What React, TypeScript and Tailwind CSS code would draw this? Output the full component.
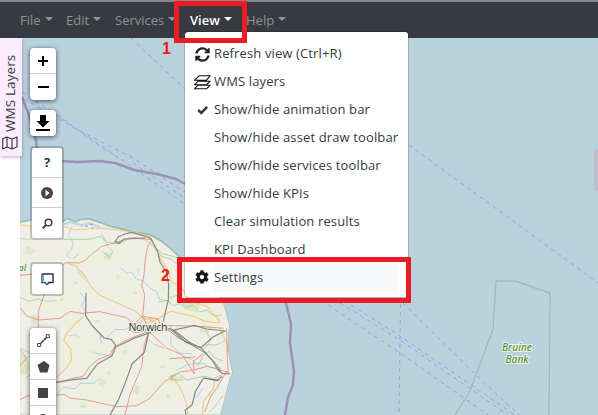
import React from "react";

const menuItems = [
  { label: "Refresh view (Ctrl+R)", icon: "refresh" },
  { label: "WMS layers", icon: "layers" },
  { label: "Show/hide animation bar", icon: "check" },
  { label: "Show/hide asset draw toolbar" },
  { label: "Show/hide services toolbar" },
  { label: "Show/hide KPIs" },
  { label: "Clear simulation results" },
  { label: "KPI Dashboard" },
  { label: "Settings", icon: "gear", active: true },
];

function MenuIcon({ name }: { name?: string }) {
  if (name === "refresh")
    return (
      <svg width="15" height="15" viewBox="0 0 512 512" className="ml-px" fill="#212529">
        <path d="M370.72 133.28C339.458 104.008 298.888 87.962 255.848 88c-77.458.068-144.328 53.178-162.791 126.85-1.344 5.363-6.122 9.15-11.651 9.15H24.103c-7.498 0-13.194-6.807-11.807-14.176C33.933 94.924 134.813 8 256 8c66.448 0 126.791 26.136 171.315 68.685L463.03 40.97C478.149 25.851 504 36.559 504 57.941V192c0 13.255-10.745 24-24 24H345.941c-21.382 0-32.09-25.851-16.971-40.971l41.75-41.749zM32 296h134.059c21.382 0 32.09 25.851 16.971 40.971l-41.75 41.75c31.262 29.273 71.835 45.319 114.876 45.28 77.418-.07 144.315-53.144 162.787-126.849 1.344-5.363 6.122-9.15 11.651-9.15h57.304c7.498 0 13.194 6.807 11.807 14.176C478.067 417.076 377.187 504 256 504c-66.448 0-126.791-26.136-171.315-68.685L48.97 471.03C33.851 486.149 8 475.441 8 454.059V320c0-13.255 10.745-24 24-24z" />
      </svg>
    );
  if (name === "layers")
    return (
      <svg width="17" height="15" viewBox="0 0 17 15" fill="white" stroke="#111" strokeWidth="1.1">
        <path d="M.7 13.7 4 10.2h12l-3.3 3.5zM.7 9.7 4 6.2h12l-3.3 3.5zM.7 5.2 5 .8h11l-3.5 4.4z" />
      </svg>
    );
  if (name === "check")
    return (
      <svg width="12" height="10" viewBox="0 0 12 10" className="ml-[3px]">
        <path d="m1.2 5 3.1 3L10.2 1.9" fill="none" stroke="#343a40" strokeWidth="2.6" />
      </svg>
    );
  if (name === "gear")
    return (
      <svg width="14" height="14" viewBox="0 0 512 512" className="mt-[-2px] ml-px" fill="#16191c">
        <path d="M487.4 315.7l-42.6-24.6c4.3-23.2 4.3-47 0-70.2l42.6-24.6c4.9-2.8 7.1-8.6 5.5-14-11.1-35.6-30-67.8-54.7-94.6-3.8-4.1-10-5.1-14.8-2.3L380.8 110c-17.9-15.4-38.5-27.3-60.8-35.1V25.8c0-5.6-3.9-10.5-9.4-11.7-36.7-8.2-74.3-7.8-109.2 0-5.5 1.2-9.4 6.1-9.4 11.7V75c-22.2 7.9-42.8 19.8-60.8 35.1L88.7 85.5c-4.9-2.8-11-1.9-14.8 2.3-24.7 26.7-43.6 58.9-54.7 94.6-1.7 5.4.6 11.2 5.5 14L67.3 221c-4.3 23.2-4.3 47 0 70.2l-42.6 24.6c-4.9 2.8-7.1 8.6-5.5 14 11.1 35.6 30 67.8 54.7 94.6 3.8 4.1 10 5.1 14.8 2.3l42.6-24.6c17.9 15.4 38.5 27.3 60.8 35.1v49.2c0 5.6 3.9 10.5 9.4 11.7 36.7 8.2 74.3 7.8 109.2 0 5.5-1.2 9.4-6.1 9.4-11.7v-49.2c22.2-7.9 42.8-19.8 60.8-35.1l42.6 24.6c4.9 2.8 11 1.9 14.8-2.3 24.7-26.7 43.6-58.9 54.7-94.6 1.5-5.5-.7-11.3-5.6-14.1zM256 336c-44.1 0-80-35.9-80-80s35.9-80 80-80 80 35.9 80 80-35.9 80-80 80z" />
      </svg>
    );
  return null;
}

function NavItem({ label, width, active = false }: { label: string; width: string; active?: boolean }) {
  return (
    <div className={`flex shrink-0 items-center whitespace-nowrap ${width} ${active ? "font-semibold text-white" : "text-[#919397]"}`}>
      <span className="mt-px">{label}</span>
      <span className="mt-[-2px] ml-[4px] border-x-[4px] border-t-[4px] border-x-transparent border-t-current" />
    </div>
  );
}

// The Norfolk coast, drawn on a grid three times finer than the page.
function Land() {
  return (
    <g transform="translate(20 38) scale(.33333)" strokeLinecap="round">
      <path
        d="M0 552 30 547 130 551 140 541 160 550 175 545 205 542 250 556 290 570 340 584 390 590 420 606 450 629 475 653 530 700 590 765 612 800 622 836 629 861 625 912 626 940 630 970 638 1005 630 1022 620 1060 602 1131H0Z"
        fill="#efefe8" stroke="#a9c9b4" strokeWidth="3"
      />
      <g fill="#edf1dc" opacity=".8">
        <path d="M130 600 250 602 330 616 395 630 372 680 290 665 220 690 150 650ZM0 740 60 700 130 715 190 800 170 830 70 820 0 780ZM240 700 350 720 345 790 300 800 240 760ZM395 640 450 690 478 780 435 800 400 730Z" />
        <path d="M130 840 195 850 270 930 210 1000 130 980 145 900ZM290 910 350 910 320 1000 290 1090 110 1120 210 1020ZM390 910 450 930 500 1020 470 1090 350 1110ZM530 780 590 800 600 850 540 860 460 830Z" />
      </g>
      <g fill="#d3e3ba" opacity=".65">
        <path d="M0 945 20 957 32 985 20 1012 0 1010ZM35 830l25 8-8 20-22-4ZM170 688l18 12 10 30-26-24ZM255 640l22 8-6 20-22-6ZM480 778l60 15-8 30-38-8ZM550 862l30 8-18 16-26-5ZM450 1010l42 6-20 18-20-5ZM20 625l30 14-12 10-30-2ZM345 1040l15 5-6 24-14-4ZM240 1020l20 10-10 20-15-8Z" />
        <path d="M160 730h12v9h-12zM225 845h14v8h-14zM290 710h9v12h-9zM340 760h12v8h-12zM260 1000h12v12h-12zM310 935h10v12h-10zM420 980h14v10h-14zM180 1100h16v10h-16zM215 940h12v8h-12zM350 690h9v16h-9zM120 780h11v9h-11zM440 1070h10v12h-10zM565 1060h12v16h-12z" />
      </g>
      <g stroke="#88b899" strokeWidth="5" opacity=".75">
        <path d="M0 552 25 547M130 551 142 541 165 552 180 545 208 543 235 552 270 565 295 570 345 583 390 590 425 610 452 632 482 660" />
      </g>
      <g stroke="#a6c99c" strokeWidth="3" opacity=".8">
        <path d="M130 604 210 604 240 595 262 613 300 618 330 599 372 604 405 628 428 648 452 653 480 662M400 625 424 655 455 664 485 690M0 602 30 604" />
        <path d="M415 792 440 787 460 803 480 797 500 808 518 802 540 822 560 816 584 835 605 830M450 780 475 770 490 790M450 865 475 898 506 916 530 930 560 920 588 921 620 906M490 955 515 964 535 982 550 952 568 940 583 959 606 968M450 1015 474 1006 500 1026 552 1015 580 1022 606 1010M559 880 573 906 553 932M465 1010 452 1025 490 1026M606 1075 585 1106 570 1120" />
      </g>
      <g stroke="#a2cce0" strokeWidth="2.5">
        <path d="M155 568 145 590 160 614 154 636 140 650 148 660M246 588 262 625 280 640 268 656 246 640M160 661 175 649M0 778 25 790 55 783 80 790 110 788M180 765 195 780 186 805 196 820M150 894 166 889 178 900M240 894 260 900 286 874 317 875 335 860 360 852M240 895 244 915M30 945 0 930M110 1072 128 1048 166 1052 180 1036 220 1036 240 1022M225 945 278 955M302 690 322 706 335 702 348 722 372 730 390 750 410 761 418 784 450 790M453 895 452 920 480 946 515 947M470 998 502 980 545 975 570 989 602 990M550 1050 530 1078M380 900 400 918 432 930" />
      </g>
      <g stroke="#efc97f" strokeWidth="3.2">
        <path d="M0 561 35 565M130 565 165 575 240 570 300 577 346 583 391 596 400 622 422 663 447 702 452 730 487 752 510 790 560 804 600 850M140 674 168 684 195 713 212 745 240 772 290 794 345 819 370 840 400 850M187 838 169 855 139 887 131 909 152 932 155 965 140 990 110 1017M370 840 380 855 400 850 452 820 520 835 554 850 600 855M356 870 368 843 395 842 412 872M452 1015 475 1040 490 1070 500 1100 505 1130M585 1020 580 1052 550 1090 548 1130M600 872 622 920 622 940" />
      </g>
      <g stroke="#e28f76" strokeWidth="3" opacity=".85">
        <path d="M0 712 40 708M125 683 138 674 178 675 195 667 215 649 245 625 285 615 315 605 345 599 395 605 382 628 375 672 372 711 365 742 374 770 368 835 386 872" />
        <path d="M0 808 20 834 55 846 120 841 150 820 185 826 240 821 320 839 346 867 380 876M55 868 55 820 75 765M0 983 20 960 0 936M20 1020 30 1010M0 1085 30 1070" />
        <path d="M110 1033 190 1014 210 984 235 964 270 950 282 929 315 908 356 891 388 880M110 1071 135 1070 150 1080 200 1086 290 1106 350 1103 387 1083 435 1030 480 1002 512 998 562 985 595 994 628 1005M315 1131 330 1070 365 985 373 920 386 880" />
        <path d="M386 878 343 884 325 873 350 850 368 835 415 843 422 864 390 884 440 930 488 952 523 1008 520 970 548 948M390 883 430 862 540 865 610 871M620 872 622 965 625 1008M620 1000 590 1050 570 1080 555 1120M450 962 525 957" />
      </g>
      <g stroke="#898b85" strokeWidth="3.7">
        <path d="M198 765 197 833 215 861 252 900 274 904 287 922 285 930M287 610 294 597 315 588 334 583 370 593 393 602 413 640 420 672 439 702 446 741 445 785 430 850" />
        <path d="m110 1033 50-8 40-4 32-43 43-24 12-27 60-28 45-16M270 1131l25-45 21-52 20-56 37-35 12-55M285 610 297 616 312 603 374 600" />
        <path d="m440 870 25 9 45 35 33 16 35 38 16 28 13 10 22 2M458 877l65-15 37 11 56 6-37 18-36 32-43-15-50-42M548 1024l-21 35-11 42-20 15 2 15M550 1020l40 8 15-12" />
      </g>
      <path d="m440 872 35 28 32 15 46 29 36 34 12 20M552 1020l46 7" stroke="#5d745e" strokeWidth="2" />
      <path d="m135 558 18-7 30 11 25-6 28 10" stroke="#b4d3dc" strokeWidth="8" opacity=".8" />
      <path d="M196 562h7v5h-7zM210 557h8v4h-8zM215 567h5v4h-5z" fill="#7278d9" opacity=".6" />
    </g>
  );
}

function MapCanvas() {
  return (
    <svg width="578" height="377" viewBox="20 38 578 377" className="block" fill="none" strokeLinejoin="round">
      <path fill="#bad2de" d="M20 38h578v377H20z" />
      <Land />
      <g stroke="#8b87ed" opacity=".7" strokeDasharray="4 4">
        <path d="M131 38 186 90M22 92 80 131 135 169 186 205M24 99 78 130 133 158 186 193M58 115 91 140 118 158M133 163 186 199M409 145 598 283M400.5 304 399 415M403 303 475 374 519 415M351 305 400 336 465 381 515 415M340 303 400 340 508 415M328 305 400 353 488 415" />
      </g>
      <path d="m22 97 7 18 7 25 2 20 24 1 15 1 23-1 15 2 19 7 23 4 19 5 13 7M286 303l5 21-1 19 4 28-1 14-5 12-3 18" stroke="#998cae" strokeWidth="2.5" opacity=".9" />
      <path d="m455 415 15-24 23-62 3-48h19l35 12-1 122" stroke="#95c2ae" strokeWidth="1.4" />
      <path d="M595 150h8v40h-8z" fill="#c4b8c5" stroke="#bfaebd" opacity=".75" />
      <g fontFamily='"Noto Sans", sans-serif' paintOrder="stroke" stroke="#f1f4ed" strokeWidth="1.8">
        <text x="128.5" y="331" fontSize="10.5" fill="#343434" textLength="39">Norwich</text>
        <g fill="#4f9134" fontSize="10" fontStyle="italic" fontWeight="500">
          <text x="502" y="351" textLength="30">Bruine</text>
          <text x="505.5" y="363" textLength="23">Bank</text>
          <text x="18.500" y="271" fontSize="9">al</text>
        </g>
      </g>
    </svg>
  );
}

const cell = "flex items-center justify-center border-b border-[#ccc] last:border-b-0";

function MapControls() {
  return (
    <div className="absolute top-[10px] left-[10px] flex w-[34px] flex-col items-start">
      <div className="w-[26px] overflow-hidden rounded bg-white shadow-[0_1px_5px_rgba(0,0,0,0.65)]">
        <div className={`h-[26px] ${cell}`}><svg width="10" height="10"><path d="M5 0v10M0 5h10" stroke="#000" strokeWidth="2" /></svg></div>
        <div className={`h-[26px] ${cell}`}><svg width="11" height="10"><path d="M0 5h11" stroke="#000" strokeWidth="2" /></svg></div>
      </div>
      <div className="mt-[10px] flex h-[26px] w-[26px] items-center justify-center rounded bg-white shadow-[0_1px_5px_rgba(0,0,0,0.65)]">
        <svg width="14" height="16"><path d="M4 0h6v6h3.500L7 12.500.5 6H4zM0 14h14v2H0z" fill="#000" /></svg>
      </div>
      <div className="mt-[10px] w-[34px] overflow-hidden rounded border-2 border-black/20 bg-white bg-clip-padding">
        <div className={`h-[30px] ${cell} font-['Noto_Sans',sans-serif] text-[13px] font-bold text-[#333]`}>?</div>
        <div className={`h-[30px] ${cell}`}><svg width="12" height="12"><circle cx="6" cy="6" r="6" fill="#444" /><path d="M4.5 2.500 8.500 6l-4 3.500z" fill="#fff" /></svg></div>
        <div className={`h-[30px] ${cell}`}><svg width="11" height="11" fill="none" stroke="#444" strokeWidth="1.5"><circle cx="6.5" cy="4.5" r="3.3" /><path d="M4 7 .8 10.2" strokeWidth="2" /></svg></div>
      </div>
      <div className="mt-[22px] flex h-[34px] w-[34px] items-center justify-center rounded border-2 border-black/20 bg-white bg-clip-padding">
        <svg width="13" height="13" fill="none" strokeWidth="1.4"><path d="M1 1v8.500h3l2 2 2-2h1" stroke="#493b83" /><path d="M1 1h11v8.500H8" stroke="#392449" /><path d="M2.3 2v6" stroke="#4bbed0" /></svg>
      </div>
      <div className="mt-[32px] w-[26px] rounded bg-white shadow-[0_1px_5px_rgba(0,0,0,0.65)]">
        <div className={`h-[26px] ${cell}`}><svg width="13" height="13" fill="white" stroke="#444"><path d="M2 11 11 2" strokeWidth="1.5" /><path d="M.7 9.500h3v3h-3zM9.300.7h3v3h-3z" /></svg></div>
        <div className={`h-[26px] ${cell}`}><svg width="13" height="12" fill="#444"><path d="m7 0 5.500 4-2 7.500H3L.5 4z" /></svg></div>
        <div className={`h-[26px] ${cell}`}><span className="h-[10px] w-[10px] bg-[#444]" /></div>
        <div className={`h-[26px] ${cell}`}><span className="h-[10px] w-[10px] rounded-full bg-[#444]" /></div>
      </div>
    </div>
  );
}

export default function App() {
  return (
    <div className="relative flex h-[415px] w-[598px] flex-col overflow-hidden bg-white font-['Open_Sans','Noto_Sans',sans-serif] text-[13px]">
      <header className="flex h-[38px] shrink-0 items-center border-t-2 border-[#85868a] bg-[#373a41] pl-[20px]">
        <NavItem label="File" width="w-[46px]" />
        <NavItem label="Edit" width="w-[49px]" />
        <NavItem label="Services" width="w-[75px]" />
        <NavItem label="View" width="w-[56px]" active />
        <NavItem label="Help" width="w-[50px]" />
      </header>
      <main className="flex min-h-0 flex-1">
        <aside className="relative z-10 w-[20px] shrink-0">
          <div className="flex h-[118px] w-[22px] flex-col items-center bg-[#faecfc] pt-[15px] pr-[2px] shadow-[1px_2px_3px_rgba(0,0,0,0.2)]">
            <span className="h-[79px] rotate-180 whitespace-nowrap text-[13.5px] leading-[20px] tracking-[0.1px] text-[#363b42] [writing-mode:vertical-rl]">WMS Layers</span>
            <svg width="16" height="14" viewBox="0 0 16 14" className="mt-[4px]" fill="none" stroke="#333" strokeWidth="1.1"><path d="M.7 2.7 5 1l5 2 5-2v10l-5 2-5-2-4.300 2zM5 1v10M10 3v10" /></svg>
          </div>
        </aside>
        <section className="relative flex-1 overflow-hidden">
          <MapCanvas />
          <MapControls />
        </section>
      </main>

      <nav className="absolute top-[31px] left-[184px] z-20 h-[267px] w-[225px] rounded border border-black/15 bg-white bg-clip-padding pt-[8px] pr-[10px] pl-[9px] text-[#343a40]">
        {menuItems.map((item) => (
          <div key={item.label} className="flex h-[28px] items-center">
            <div className="flex w-[20px] shrink-0 items-center"><MenuIcon name={item.icon} /></div>
            <div className={`flex h-full flex-1 items-center whitespace-nowrap tracking-[0.13px] ${item.active ? "bg-[#f8f9fa]" : ""}`}>{item.label}</div>
          </div>
        ))}
      </nav>

      <div className="absolute top-[1px] left-[174px] z-30 h-[42px] w-[73px] border-[5px] border-[#ed1c24]" />
      <div className="absolute top-[257px] left-[177px] z-30 h-[46px] w-[234px] border-[5px] border-[#ed1c24]" />
      <span className="absolute top-[40px] left-[162px] z-30 font-['Liberation_Sans',sans-serif] text-[16px] leading-[18px] font-bold text-[#ed1c24]">1</span>
      <span className="absolute top-[267px] left-[161px] z-30 font-['Liberation_Sans',sans-serif] text-[16px] leading-[18px] font-bold text-[#ed1c24]">2</span>
    </div>
  );
}
